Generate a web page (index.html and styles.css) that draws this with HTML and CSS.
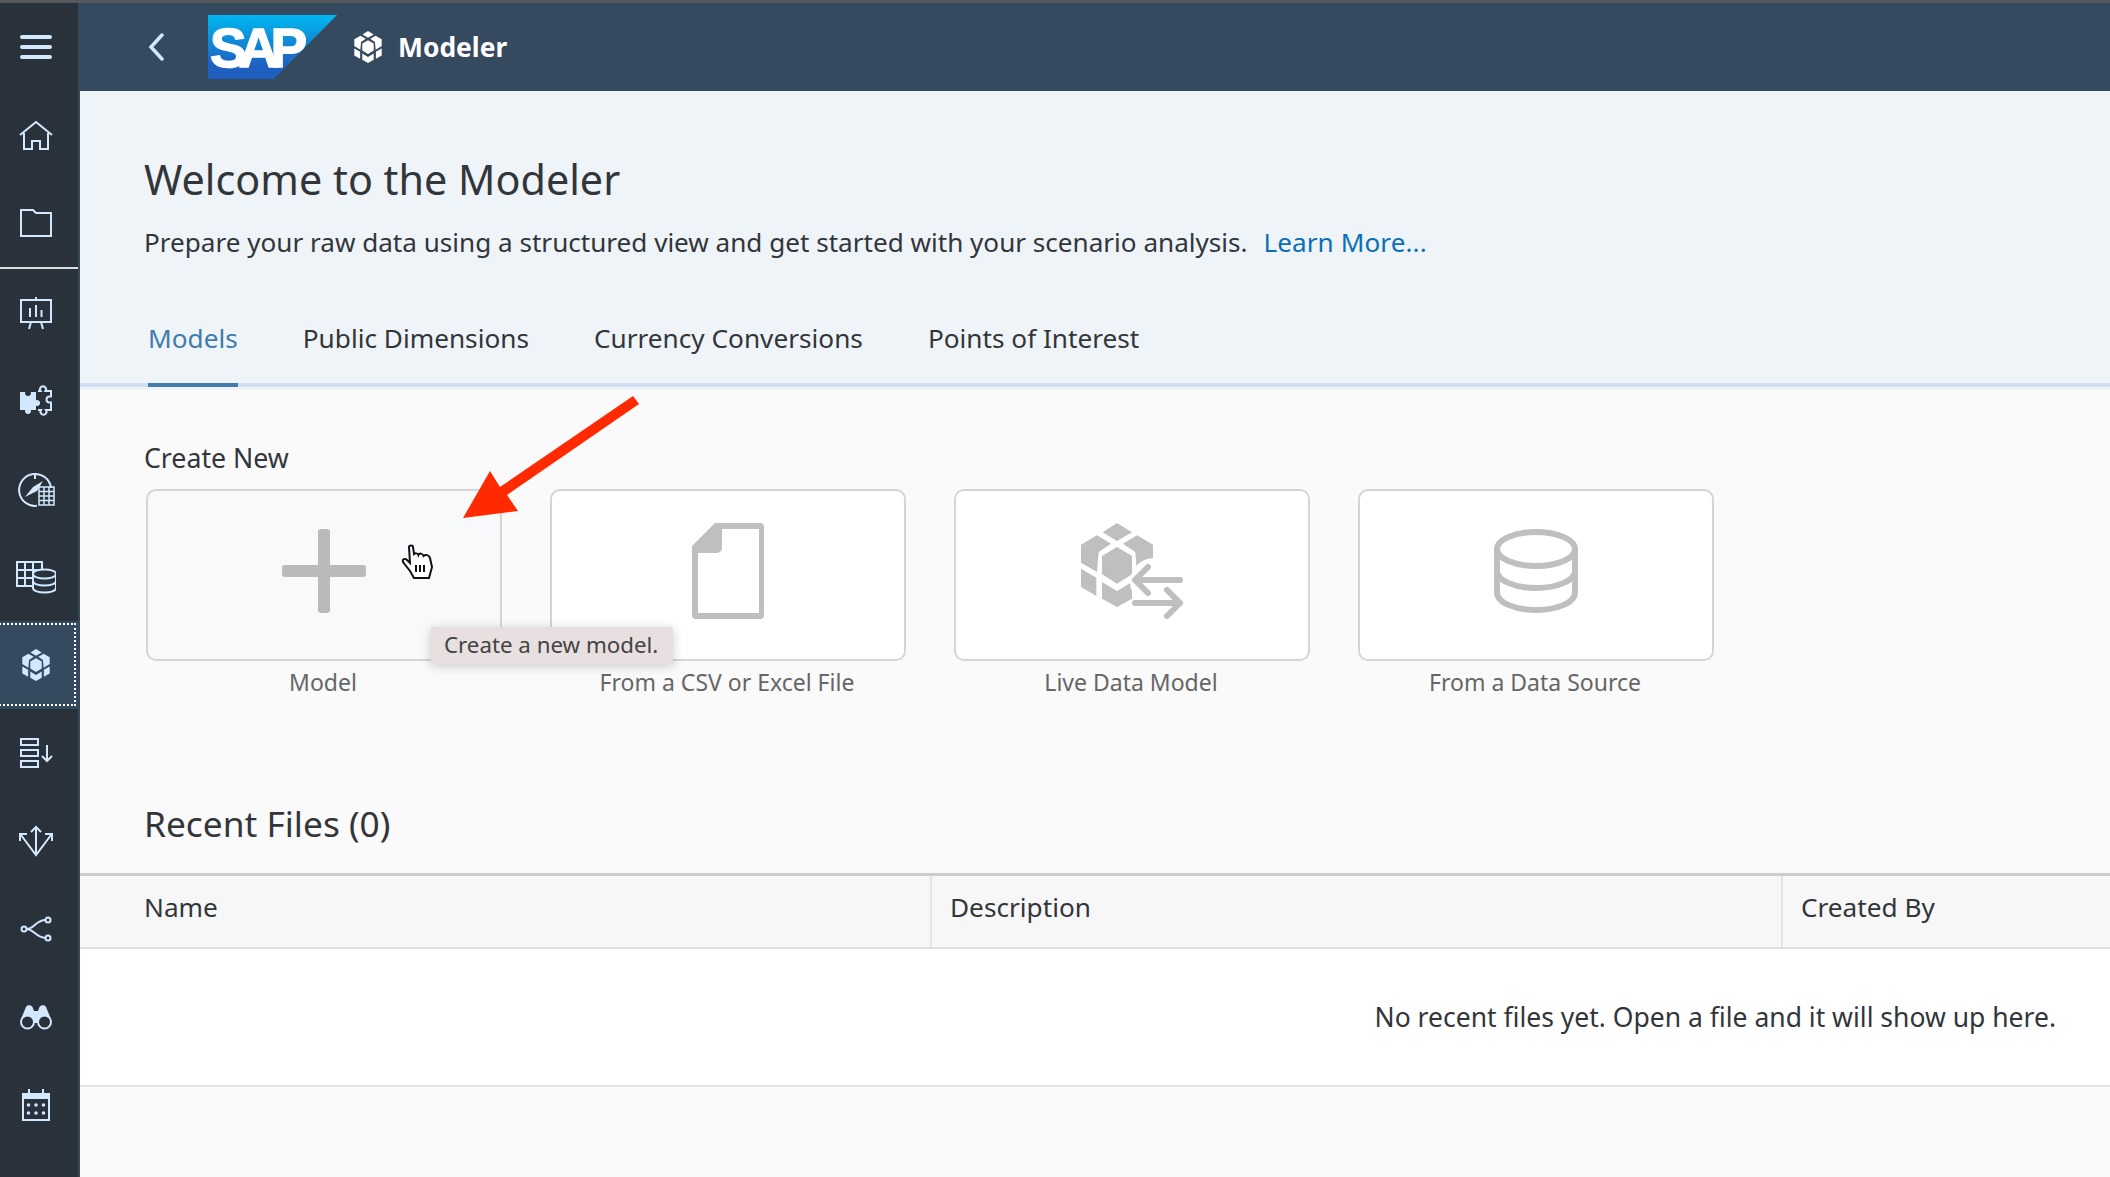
FILE: index.html
```html
<!DOCTYPE html>
<html lang="en">
<head>
  <meta charset="UTF-8">
  <title>Modeler</title>
  <link rel="stylesheet" href="styles.css">
</head>
<body>
  <svg class="sprite" width="0" height="0">
    <symbol id="cube" viewBox="92 68 216 252">
      <polygon points="200,68 245,96 200,122 157,96"/>
      <polygon points="140,105 182,130 145,155 140,215 92,187 92,133"/>
      <polygon points="260,105 218,130 255,155 260,215 308,187 308,133"/>
      <polygon points="200,140 245,167 245,222 200,250 155,222 155,167"/>
      <polygon points="92,205 138,232 138,287 92,260"/>
      <polygon points="308,205 262,232 262,287 308,260"/>
      <polygon points="155,245 200,272 245,245 245,295 200,320 155,295"/>
    </symbol>
  </svg>

  <div class="top-strip"></div>
  <div class="app">
    <nav class="sidebar">
      <div class="nav-item">
        <svg class="nav-icon" viewBox="0 0 40 40"><path class="bars" d="M6 10H34M6 20H34M6 30H34"/></svg>
      </div>
      <div class="nav-item">
        <svg class="nav-icon" viewBox="0 0 40 40"><path d="M4 20L20 7L36 20M8 18V34H16V26H24V34H32V18"/></svg>
      </div>
      <div class="nav-item">
        <svg class="nav-icon" viewBox="0 0 40 40"><path d="M5 7H17L20 10H35V33H5Z"/></svg>
      </div>
      <div class="nav-divider"></div>
      <div class="nav-item">
        <svg class="nav-icon" viewBox="0 0 40 40"><path d="M5 7H35V29H5ZM20 4V7M15 29L13 36M25 29L27 36M14 24V15M20 24V12M25.500 24V17"/></svg>
      </div>
      <div class="nav-item">
        <svg class="nav-icon" viewBox="0 0 40 40">
          <path class="solid" d="M4 11H9.200A3 3 0 1 0 14.800 11H20V19.200A3 3 0 1 1 20 24.800V29H14.800A3 3 0 1 1 9.200 29H4Z"/>
          <path d="M22 10H24.500A3 3 0 1 1 29.500 10H35V15.500H33.500A3 3 0 0 0 33.500 21.500H35V29H30A3 3 0 1 1 25 29H22"/>
        </svg>
      </div>
      <div class="nav-item">
        <svg class="nav-icon" viewBox="0 0 40 40">
          <path d="M21 36.800A16 16 0 1 1 35 19M19 6V10"/>
          <path class="solid" d="M9 28L17 18L27 12L21 22Z"/>
          <path class="thin" d="M23 18H38V36H23ZM23 22.500H38M23 27H38M23 31.500H38M28 18V36M33 18V36"/>
        </svg>
      </div>
      <div class="nav-item">
        <svg class="nav-icon" viewBox="0 0 40 40">
          <path d="M1 5H26V29H1ZM1 13H26M1 21H17M9 5V29M17 5V21"/>
          <path class="cover" d="M17 17C17 11 40 11 40 17V31C40 37 17 37 17 31Z"/>
          <path d="M17 24C17 30 40 30 40 24M17 17C17 23 40 23 40 17"/>
        </svg>
      </div>
      <div class="nav-item selected">
        <svg class="cube-icon"><use href="#cube"/></svg>
      </div>
      <div class="nav-item">
        <svg class="nav-icon" viewBox="0 0 40 40"><path d="M5 6H22V12H5ZM5 17H22V23H5ZM5 28H22V34H5ZM31 12V28M26 23L31 28L36 23"/></svg>
      </div>
      <div class="nav-item">
        <svg class="nav-icon" viewBox="0 0 40 40"><path d="M20 6V34M15 11L20 6L25 11M5 14L20 34L35 14M4 20V13H11M36 20V13H29"/></svg>
      </div>
      <div class="nav-item">
        <svg class="nav-icon" viewBox="0 0 40 40">
          <circle cx="8" cy="20" r="2.500"/><circle cx="32" cy="11" r="2.500"/><circle cx="32" cy="29" r="2.500"/>
          <path d="M10.500 20C18 20 20 11 29.500 11M10.500 20C18 20 20 29 29.500 29"/>
        </svg>
      </div>
      <div class="nav-item">
        <svg class="nav-icon" viewBox="0 0 40 40">
          <path class="solid" d="M5 22L10 10C11 7.500 15 7.500 16.500 10L18 14H22L23.500 10C25 7.500 29 7.500 30 10L35 22V26H5Z"/>
          <circle class="cover" cx="11.500" cy="25" r="6.500"/><circle class="cover" cx="28.500" cy="25" r="6.500"/>
        </svg>
      </div>
      <div class="nav-item">
        <svg class="nav-icon" viewBox="0 0 40 40">
          <path class="solid" d="M6 8H12V4H14V8H26V4H28V8H34V14H6Z"/>
          <path d="M7 12H33V35H7Z"/>
          <g class="solid">
            <circle cx="12.500" cy="20" r="1.800"/><circle cx="20" cy="20" r="1.800"/><circle cx="27.500" cy="20" r="1.800"/>
            <circle cx="12.500" cy="28" r="1.800"/><circle cx="20" cy="28" r="1.800"/><circle cx="27.500" cy="28" r="1.800"/>
          </g>
        </svg>
      </div>
    </nav>

    <div class="main">
      <header class="shell-bar">
        <svg class="back" width="16" height="28" viewBox="0 0 16 28"><path d="M14 2L3 14L14 26"/></svg>
        <div class="sap-logo"><span class="sap-word">SAP</span></div>
        <svg class="cube-icon"><use href="#cube"/></svg>
        <span class="app-title">Modeler</span>
      </header>

      <section class="hero">
        <h1 class="hero-title">Welcome to the Modeler</h1>
        <p class="hero-text">Prepare your raw data using a structured view and get started with your scenario analysis. <a class="learn" href="#">Learn More...</a></p>
        <div class="tabs">
          <a class="tab active" href="#">Models</a>
          <a class="tab" href="#">Public Dimensions</a>
          <a class="tab" href="#">Currency Conversions</a>
          <a class="tab" href="#">Points of Interest</a>
        </div>
      </section>

      <section class="create">
        <h2 class="create-title">Create New</h2>
        <div class="cards">
          <div class="card-wrap">
            <div class="card hovered">
              <svg class="card-icon" viewBox="0 0 120 120"><rect x="54" y="14" width="12" height="84" rx="3"/><rect x="18" y="50" width="84" height="12" rx="3"/></svg>
            </div>
            <div class="card-label">Model</div>
          </div>
          <div class="card-wrap">
            <div class="card">
              <svg class="card-icon" viewBox="0 0 120 120"><path fill-rule="evenodd" d="M47 8H92A4 4 0 0 1 96 12V100A4 4 0 0 1 92 104H28A4 4 0 0 1 24 100V31ZM54 14V33A5 5 0 0 1 49 38H30V98H91V14Z"/></svg>
            </div>
            <div class="card-label">From a CSV or Excel File</div>
          </div>
          <div class="card-wrap">
            <div class="card">
              <svg class="card-icon" viewBox="0 0 120 120">
                <use href="#cube" x="9" y="8" width="72" height="84"/>
                <circle class="halo-fill" cx="82" cy="67" r="24"/>
                <path class="halo" d="M63 88H108"/>
                <path class="arrow" d="M108 65H63M76 52L63 65L76 78M63 88H108M95 75L108 88L95 101"/>
              </svg>
            </div>
            <div class="card-label">Live Data Model</div>
          </div>
          <div class="card-wrap">
            <div class="card">
              <svg class="card-icon" viewBox="0 0 120 120">
                <ellipse class="arrow" cx="60" cy="34" rx="39" ry="17"/>
                <path class="arrow" d="M21 34V78C21 87 38 95 60 95S99 87 99 78V34M21 56C21 65 38 73 60 73S99 65 99 56"/>
              </svg>
            </div>
            <div class="card-label">From a Data Source</div>
          </div>
        </div>
        <h2 class="recent-title">Recent Files (0)</h2>
      </section>

      <div class="files">
        <div class="files-head">
          <div class="col first">Name</div>
          <div class="col">Description</div>
          <div class="col last">Created By</div>
        </div>
        <div class="files-empty">No recent files yet. Open a file and it will show up here.</div>
      </div>
    </div>
  </div>

  <!-- annotation laid over the screenshot -->
  <div class="tooltip">Create a new model.</div>
  <svg class="red-arrow" width="190" height="135" viewBox="460 392 190 135"><polygon points="633,396 639,404 507,495 518,511 463,518 490,471 500,487"/></svg>
  <svg class="hand" width="34" height="38" viewBox="-2 -2 34 38">
    <path d="M7 2C7 0 11 0 11 2L12 9C13 8 16 8 16.500 10C17.500 8 20.500 8 21.500 11C23.500 9 27 10 28 13L30 22L27 33H12L8 26L1 17C0 14 3 13 5 15L8 18Z"/>
    <path d="M14 20V27M18 20V27M22 20V27"/>
  </svg>
</body>
</html>
```

FILE: styles.css
```css
* {
  box-sizing: border-box;
}
html, body {
  margin: 0;
  padding: 0;
  height: 1177px;
  overflow: hidden;
}
body {
  position: relative;
  font-family: "Noto Sans", "Open Sans", sans-serif;
  color: #32363a;
  background: #fafafa;
}
.sprite {
  position: absolute;
}
.top-strip {
  height: 3px;
  background: #58595c;
}
.app {
  display: flex;
  height: 1174px;
}

/* left nav */
.sidebar {
  width: 80px;
  flex: none;
  background: #29313a;
  border-right: 2px solid #354a5f;
}
.nav-item {
  position: relative;
  height: 88px;
  padding-right: 6px;
  display: flex;
  align-items: center;
  justify-content: center;
  overflow: hidden;
}
.nav-icon {
  width: 40px;
  height: 40px;
  fill: none;
  stroke: #d1e8ff;
  stroke-width: 2;
}
.nav-icon .bars {
  stroke-width: 4;
  stroke-linecap: round;
}
.nav-icon .solid {
  fill: #d1e8ff;
  stroke: none;
}
.nav-icon .thin {
  stroke-width: 1.500;
}
.nav-icon .cover {
  fill: #29313a;
}
.nav-divider {
  height: 2px;
  width: 78px;
  background: #dddddd;
}
.nav-item.selected {
  background: #354a5f;
}
.nav-item.selected::after {
  content: "";
  position: absolute;
  top: 2px;
  bottom: 3px;
  left: -4px;
  right: 2px;
  border: 2px dotted #fff;
}
.cube-icon {
  width: 28px;
  height: 32px;
  fill: #d1e8ff;
}

/* main column */
.main {
  flex: 1;
  min-width: 0;
}
.shell-bar {
  height: 88px;
  margin-left: -2px;
  padding-left: 70px;
  background: #354a5f;
  display: flex;
  align-items: center;
}
.back {
  fill: none;
  stroke: #d1e8ff;
  stroke-width: 3.500;
  stroke-linecap: round;
}
.sap-logo {
  width: 129px;
  height: 64px;
  margin-left: 44px;
  padding-left: 2px;
  background: linear-gradient(#00b8f1, #1e5fbf 80%);
  clip-path: polygon(0 0, 100% 0, 51% 100%, 0 100%);
  display: flex;
  align-items: center;
}
.sap-word {
  font-family: "Liberation Sans", sans-serif;
  font-weight: 700;
  font-size: 55px;
  line-height: 64px;
  letter-spacing: -8px;
  color: #fff;
  margin-top: 2px;
  -webkit-text-stroke: 1.500px #fff;
}
.shell-bar .cube-icon {
  margin-left: 17px;
  fill: #fff;
}
.app-title {
  margin-left: 16px;
  font-size: 26.400px;
  font-weight: 700;
  color: #fff;
}

.hero {
  height: 299px;
  padding: 60px 0 0 64px;
  background: #eff4f9;
}
.hero-title {
  margin: 0;
  font-size: 41.300px;
  font-weight: 400;
  line-height: 57px;
}
.hero-text {
  margin: 15px 0 0;
  font-size: 26.100px;
  line-height: 39px;
}
.learn {
  margin-left: 9px;
  color: #0a6fb5;
  letter-spacing: 0.100px;
  text-decoration: none;
}
.tabs {
  display: flex;
  gap: 65px;
  height: 92px;
  margin: 33px 0 0 -64px;
  padding-left: 68px;
  border-bottom: 4px solid #d1dff0;
}
.tab {
  height: 92px;
  line-height: 86px;
  font-size: 26.200px;
  color: #32363a;
  text-decoration: none;
}
.tab.active {
  color: #427cac;
  border-bottom: 4px solid #427cac;
}

.create {
  padding: 50px 0 0 64px;
}
.create-title {
  margin: 0;
  font-size: 26.700px;
  font-weight: 400;
  line-height: 36px;
}
.cards {
  display: flex;
  gap: 48px;
  margin: 13px 0 0 2px;
}
.card-wrap {
  width: 356px;
}
.card {
  height: 172px;
  background: #fff;
  border: 2px solid #d5d5d5;
  border-radius: 10px;
  display: flex;
  align-items: center;
  justify-content: center;
}
.card.hovered {
  background: #f8f9fb;
}
.card-icon {
  width: 120px;
  height: 120px;
  fill: #bfbfbf;
}
.card.hovered .card-icon {
  fill: #b9babc;
}
.arrow {
  fill: none;
  stroke: #bfbfbf;
  stroke-width: 6;
  stroke-linecap: round;
  stroke-linejoin: round;
}
.halo {
  fill: none;
  stroke: #fff;
  stroke-width: 16;
}
.halo-fill {
  fill: #fff;
}
.card-label {
  padding-right: 2px;
  text-align: center;
  font-size: 23px;
  line-height: 42px;
  color: #666;
}
.recent-title {
  margin: 96px 0 26px;
  font-size: 35.300px;
  font-weight: 400;
  line-height: 48px;
}

.files {
  background: #fff;
  border-top: 3px solid #ccc;
  border-bottom: 2px solid #e5e5e5;
}
.files-head {
  display: grid;
  grid-template-columns: 852px 851px 1fr;
  height: 73px;
  background: #f7f7f7;
  border-bottom: 2px solid #ddd;
}
.col {
  padding-left: 18px;
  font-size: 26.200px;
  line-height: 62px;
  border-right: 2px solid #e5e5e5;
}
.col.first {
  padding-left: 64px;
}
.col.last {
  border-right: none;
}
.files-empty {
  height: 136px;
  padding-right: 54px;
  text-align: right;
  font-size: 26.500px;
  line-height: 136px;
}

/* overlays */
.tooltip {
  position: absolute;
  left: 431px;
  top: 627px;
  width: 242px;
  height: 37px;
  padding-left: 13px;
  background: #e8e0e0;
  font-size: 22.300px;
  line-height: 35px;
  color: #444;
  white-space: nowrap;
  box-shadow: 0 2px 10px rgba(0, 0, 0, 0.2);
}
.red-arrow {
  position: absolute;
  left: 460px;
  top: 392px;
  fill: #ff2a00;
}
.hand {
  position: absolute;
  left: 400px;
  top: 543px;
  fill: #fff;
  stroke: #111;
  stroke-width: 2;
}
```
